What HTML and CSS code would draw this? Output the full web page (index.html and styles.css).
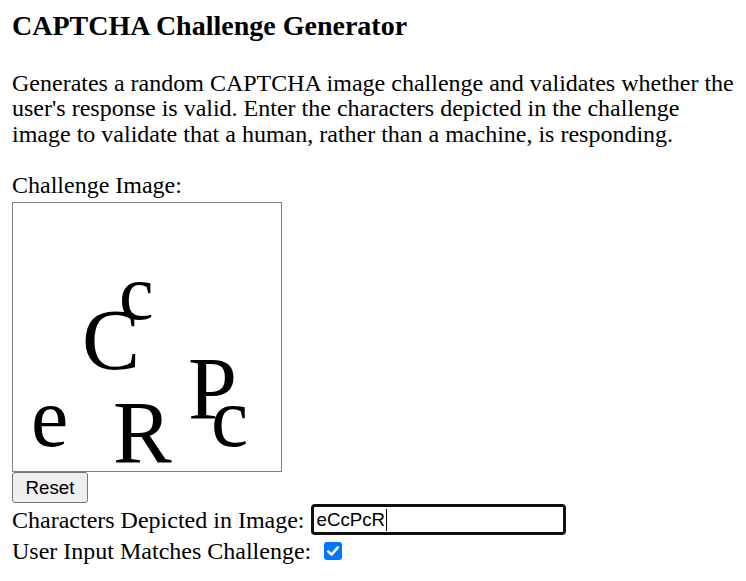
FILE: index.html
```html
<!DOCTYPE html>
<html lang="en">
<head>
<meta charset="utf-8">
<title>CAPTCHA Challenge Generator</title>
<link rel="stylesheet" href="styles.css">
</head>
<body>
<main class="page">
  <h1 class="title">CAPTCHA Challenge Generator</h1>
  <p class="intro">Generates a random CAPTCHA image challenge and validates whether the user's response is valid. Enter the characters depicted in the challenge image to validate that a human, rather than a machine, is responding.</p>
  <div class="label">Challenge Image:</div>
  <div class="captcha">
    <svg class="captcha-svg" width="268" height="268" viewBox="0 0 268 268" xmlns="http://www.w3.org/2000/svg">
      <g font-family="'Liberation Serif', 'Times New Roman', serif" fill="#000">
        <text x="18" y="243" font-size="84">e</text>
        <text x="69" y="166" font-size="87">C</text>
        <text x="106" y="116" font-size="78">c</text>
        <text x="100" y="259" font-size="88">R</text>
        <text x="175" y="215" font-size="88">P</text>
        <text x="198" y="243" font-size="84">c</text>
      </g>
    </svg>
  </div>
  <button class="reset" type="button">Reset</button>
  <div class="row row-input">
    <span class="row-label">Characters Depicted in Image:</span>
    <div class="textbox" role="textbox">eCcPcR<span class="caret"></span></div>
  </div>
  <div class="row row-check">
    <span class="row-label">User Input Matches Challenge:</span>
    <span class="checkbox" role="checkbox" aria-checked="true">
      <svg width="18" height="18" viewBox="0 0 18 18" xmlns="http://www.w3.org/2000/svg"><path d="M4.2 9.4 L7.6 12.6 L13.8 5.4" fill="none" stroke="#fff" stroke-width="2.6" stroke-linecap="round" stroke-linejoin="round"/></svg>
    </span>
  </div>
</main>
</body>
</html>
```

FILE: styles.css
```css
html, body {
  margin: 0;
  padding: 0;
  background: #fff;
}

body {
  font-family: "Liberation Serif", "Times New Roman", serif;
  font-size: 24px;
  color: #000;
}

.page {
  padding: 10px 8px 0 12px;
  display: flex;
  flex-direction: column;
  align-items: flex-start;
}

.title {
  margin: 0;
  font-size: 28px;
  line-height: 32px;
  font-weight: bold;
}

.intro {
  margin: 29px 0 0 0;
  line-height: 25.4px;
}

.label {
  margin-top: 25px;
  line-height: 26px;
}

.captcha {
  margin-top: 4px;
  width: 268px;
  height: 268px;
  border: 1px solid #808080;
  background: #fff;
}

.captcha-svg {
  display: block;
}

.reset {
  margin: 0;
  width: 76px;
  height: 31px;
  font-family: Arial, "Liberation Sans", sans-serif;
  font-size: 18.7px;
  color: #000;
  background: #efefef;
  border: 1px solid #767676;
  border-radius: 3px;
  padding: 0;
}

.row {
  display: flex;
  align-items: center;
}

.row-input {
  margin-top: 1px;
  height: 31px;
}

.row-label {
  line-height: 26px;
}

.textbox {
  margin-left: 6px;
  box-sizing: border-box;
  width: 255px;
  height: 31px;
  border: 3px solid #101010;
  border-radius: 4px;
  padding: 0 3px;
  font-family: Arial, "Liberation Sans", sans-serif;
  font-size: 18.7px;
  line-height: 25px;
  display: flex;
  align-items: center;
}

.caret {
  display: inline-block;
  width: 1px;
  height: 22px;
  background: #000;
  margin-left: 1px;
}

.row-check {
  margin-top: 3px;
  height: 26px;
}

.checkbox {
  margin-left: 13px;
  width: 18px;
  height: 18px;
  border-radius: 3px;
  background: #0075ff;
  display: flex;
}
```
